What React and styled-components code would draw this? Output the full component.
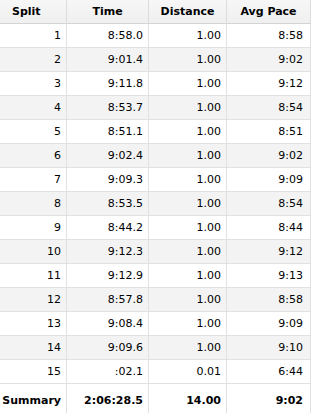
import React from "react";
import styled, { createGlobalStyle } from "styled-components";

const GlobalStyle = createGlobalStyle`
  html, body { margin: 0; padding: 0; background: #ffffff; }
  body { font-family: "DejaVu Sans", "Liberation Sans", sans-serif; font-size: 11px; color: #000; }
`;

const splits = [
  ["1", "8:58.0", "1.00", "8:58"],
  ["2", "9:01.4", "1.00", "9:02"],
  ["3", "9:11.8", "1.00", "9:12"],
  ["4", "8:53.7", "1.00", "8:54"],
  ["5", "8:51.1", "1.00", "8:51"],
  ["6", "9:02.4", "1.00", "9:02"],
  ["7", "9:09.3", "1.00", "9:09"],
  ["8", "8:53.5", "1.00", "8:54"],
  ["9", "8:44.2", "1.00", "8:44"],
  ["10", "9:12.3", "1.00", "9:12"],
  ["11", "9:12.9", "1.00", "9:13"],
  ["12", "8:57.8", "1.00", "8:58"],
  ["13", "9:08.4", "1.00", "9:09"],
  ["14", "9:09.6", "1.00", "9:10"],
  ["15", ":02.1", "0.01", "6:44"],
];

const Table = styled.div`
  width: 311px;
  display: flex;
  flex-direction: column;
`;

const Row = styled.div`
  display: grid;
  grid-template-columns: 67px 82px 78px 84px;
  height: ${(p) => p.$height || 24}px;
  background: ${(p) => (p.$alt ? "#f3f3f3" : "#ffffff")};
`;

const HeaderRow = styled(Row)`
  background: linear-gradient(#f7f7f7, #efefef);
`;

const Cell = styled.div`
  display: flex;
  align-items: center;
  justify-content: flex-end;
  box-sizing: border-box;
  padding-right: ${(p) => (p.$last ? 7 : 5)}px;
  border-right: 1px solid #e1e1e1;
  border-bottom: ${(p) => (p.$noBottom ? "none" : "1px solid #e1e1e1")};
  font-weight: ${(p) => (p.$bold ? 700 : 400)};
  white-space: nowrap;
`;

const HeaderCell = styled.div`
  display: flex;
  align-items: center;
  justify-content: ${(p) => (p.$left ? "flex-start" : "center")};
  padding-left: ${(p) => (p.$left ? 12 : 0)}px;
  box-sizing: border-box;
  border-right: 1px solid #dcdcdc;
  border-bottom: 1px solid #d4d4d4;
  font-weight: 700;
  white-space: nowrap;
`;

export default function App() {
  return (
    <>
      <GlobalStyle />
      <Table>
        <HeaderRow>
          <HeaderCell $left>Split</HeaderCell>
          <HeaderCell>Time</HeaderCell>
          <HeaderCell>Distance</HeaderCell>
          <HeaderCell>Avg Pace</HeaderCell>
        </HeaderRow>
        {splits.map((r, i) => (
          <Row key={r[0]} $alt={i % 2 === 1}>
            <Cell>{r[0]}</Cell>
            <Cell>{r[1]}</Cell>
            <Cell>{r[2]}</Cell>
            <Cell $last>{r[3]}</Cell>
          </Row>
        ))}
        <Row $height={33}>
          <Cell $bold $noBottom>Summary</Cell>
          <Cell $bold $noBottom>2:06:28.5</Cell>
          <Cell $bold $noBottom>14.00</Cell>
          <Cell $bold $noBottom $last>9:02</Cell>
        </Row>
      </Table>
    </>
  );
}
